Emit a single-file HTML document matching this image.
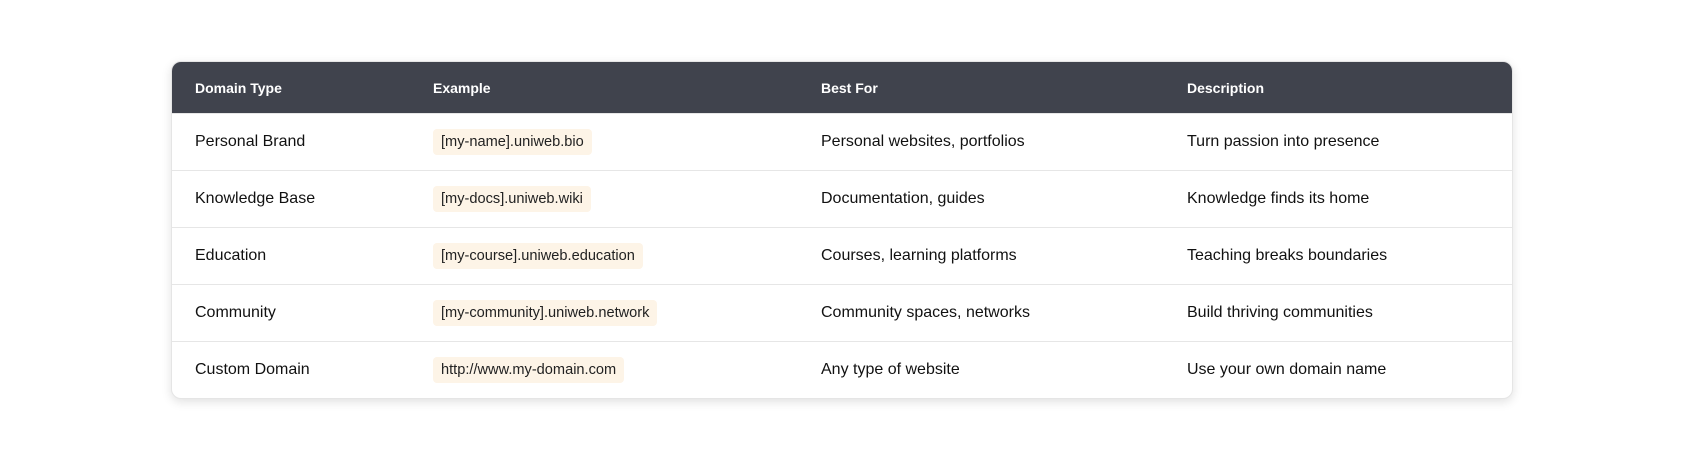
<!DOCTYPE html>
<html><head><meta charset="utf-8"><style>
html,body{margin:0;padding:0;background:#fff;width:1684px;height:460px;overflow:hidden}
body{font-family:"Liberation Sans",sans-serif;color:#111}
.t{position:absolute;left:171px;top:61px;width:1342px;border-radius:10px;overflow:hidden;box-shadow:0 3px 10px rgba(0,0,0,0.12);border:1px solid #e5e5e5;box-sizing:border-box;background:#fff}
table{border-collapse:collapse;width:100%}
th{background:#40434d;color:#fff;font-size:14px;font-weight:bold;text-align:left;height:51px;padding:0}
td{height:56px;border-top:1px solid #e6e6e6;font-size:16px;padding:0}
th:first-child,td:first-child{padding-left:23px}
code{font-family:"Liberation Sans",sans-serif;font-size:14.6px;background:#fdf4e7;padding:5px 8px;border-radius:4px;color:#222}
</style></head><body>
<div class="t"><table>
<colgroup><col style="width:261px"><col style="width:388px"><col style="width:366px"><col></colgroup>
<tr><th>Domain Type</th><th>Example</th><th>Best For</th><th>Description</th></tr>
<tr><td>Personal Brand</td><td><code>[my-name].uniweb.bio</code></td><td>Personal websites, portfolios</td><td>Turn passion into presence</td></tr>
<tr><td>Knowledge Base</td><td><code>[my-docs].uniweb.wiki</code></td><td>Documentation, guides</td><td>Knowledge finds its home</td></tr>
<tr><td>Education</td><td><code>[my-course].uniweb.education</code></td><td>Courses, learning platforms</td><td>Teaching breaks boundaries</td></tr>
<tr><td>Community</td><td><code>[my-community].uniweb.network</code></td><td>Community spaces, networks</td><td>Build thriving communities</td></tr>
<tr><td>Custom Domain</td><td><code>http://www.my-domain.com</code></td><td>Any type of website</td><td>Use your own domain name</td></tr>
</table></div>
</body></html>
